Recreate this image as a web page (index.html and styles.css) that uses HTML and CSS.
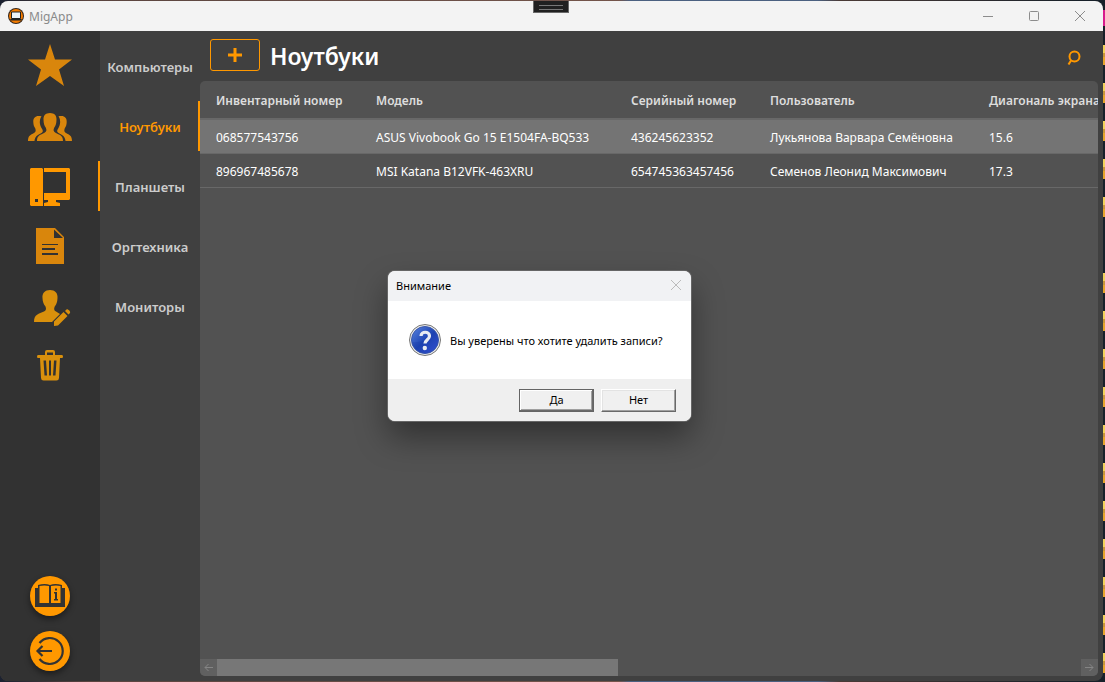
FILE: index.html
```html
<!DOCTYPE html>
<html lang="ru">
<head>
<meta charset="utf-8">
<title>MigApp</title>
<link rel="stylesheet" href="styles.css">
</head>
<body>
<div class="desktop">
  <div class="window">
    <header class="titlebar">
      <svg class="app-logo" width="16" height="16" viewBox="0 0 16 16"><circle cx="8" cy="8" r="8" fill="#33251a"/><circle cx="8" cy="8" r="7" fill="#f57c00"/><path d="M3.500 4h9v6.500h-9z" fill="#eef3f8" stroke="#222" stroke-width="1"/><path d="M2 11h12l-1 1.500H3z" fill="#222"/></svg>
      <span class="app-name">MigApp</span>
      <div class="window-buttons">
        <button class="window-button" aria-label="Свернуть"><svg width="12" height="12" viewBox="0 0 12 12"><path d="M1 6.500h10"/></svg></button>
        <button class="window-button" aria-label="Развернуть"><svg width="12" height="12" viewBox="0 0 12 12"><rect x="1.500" y="1.500" width="9" height="9" rx="1"/></svg></button>
        <button class="window-button" aria-label="Закрыть"><svg width="12" height="12" viewBox="0 0 12 12"><path d="M1 1l10 10M11 1L1 11"/></svg></button>
      </div>
    </header>
    <div class="grip"></div>
    <div class="layout">
      <nav class="rail" aria-label="Разделы">
        <button class="rail-item" aria-label="Избранное"><svg width="44" height="44" viewBox="0 0 44 44"><path d="M22 0l5 15.500h17L31 25.500l5 16.500-14-10-14 10 5-16.500L0 15.500h17z"/></svg></button>
        <button class="rail-item" aria-label="Сотрудники"><svg width="44" height="44" viewBox="0 0 44 44"><path d="M13.500 12.300C8 10.800 5 13.500 5.300 18c.1 3 .8 4.500 2 6.500.8 2 .3 3.500-1.300 4.500-3.500 2-6 2.500-6 8h6.500c.3-4.500 3-6 7-8 2-1.300 1.500-2.500.3-4.500-2.300-4-2.800-8-.3-12.200z"/><path d="M30.500 12.300c5.500-1.500 8.500 1.200 8.200 5.700-.1 3-.8 4.500-2 6.500-.8 2-.3 3.500 1.300 4.500 3.500 2 6 2.500 6 8h-6.500c-.3-4.500-3-6-7-8-2-1.300-1.500-2.500-.3-4.500 2.300-4 2.800-8 .3-12.200z"/><path d="M22 9c-4.500 0-6.700 2.800-6.500 6.500.1 4 .7 6 2.200 8 1.300 2.500.8 4.200-1.200 5.300-4 2.200-7.500 2.400-7.500 8.200h26c0-5.800-3.500-6-7.500-8.200-2-1.100-2.500-2.800-1.200-5.300 1.500-2 2.100-4 2.200-8C28.700 11.800 26.500 9 22 9z"/></svg></button>
        <button class="rail-item rail-item--active" aria-label="Техника"><svg width="44" height="44" viewBox="0 0 44 44"><path fill-rule="evenodd" d="M3 4h11l1 1v37H3l-1-1V5zM7 35h3v3H7zM16 4h25l1 1v30l-1 1H28v2l4 1v3H16v-3l4-1v-2h-4v-7h22V8H16z"/></svg></button>
        <button class="rail-item" aria-label="Документы"><svg width="44" height="44" viewBox="0 0 44 44"><path fill-rule="evenodd" d="M8 4h19l9 9v27H8zM26 5.500V14h9zM14 20h16v1H14zM14 24h13v2H14zM14 29h16v2H14z"/></svg></button>
        <button class="rail-item rail-item--gold" aria-label="Редактирование"><svg width="44" height="44" viewBox="0 0 44 44"><path d="M22 6c-5 0-8 3-7.500 8 .2 4 1 6 3 8.500 1 2.500.5 4-1.500 5-5 2.500-10 2.500-10 10.500h18l8-8-4-2.500c-2-1-2.300-2.500-1.300-5 2-2.500 2.600-4.500 2.800-8.500C30 9 27 6 22 6z"/><path d="M26 42v-4.500L35.500 28l4 4L30 41.500zM37 27l1.500-1.500c1-1 4.500 2 3.500 3.500L40.500 30.500z"/></svg></button>
        <button class="rail-item rail-item--gold" aria-label="Удалить"><svg width="44" height="44" viewBox="0 0 44 44"><path fill-rule="evenodd" d="M17 11V8q0-2 2-2h6q2 0 2 2v3h7q1 0 1 1.500T34 14h-2l-1 20q-.2 2.500-2.500 2.500h-13Q13.200 36.500 13 34l-1-20h-2q-1 0-1-1.500T10 11zM19 11h6V8.500h-6zM15.500 16.500l1 15H19l-1-15zM21 16.500v15h2v-15zM26 16.500l-1 15h2.500l1-15z"/></svg></button>
        <div class="rail-bottom">
          <button class="round-button" aria-label="Справка"><svg width="40" height="40" viewBox="0 0 40 40"><path fill="#333" d="M5 12h3V9q7-2 12 0 5-2 12 0v3h3v19H5z"/><path fill="#ff9800" d="M9.500 10q5-1 9.500 0v17H9.500zM21 10q5-1 9.500 0v17H21z"/><path fill="#333" d="M25 12.500h2v2h-2zM24 16h3v7h1v1.500h-4V23h1v-5.500h-1z"/></svg></button>
          <button class="round-button" aria-label="Выход"><svg width="40" height="40" viewBox="0 0 40 40" fill="none" stroke="#333" stroke-width="2.200"><path d="M9.500 12a13 13 0 1 1 0 16M22 20H8M12.500 15L7.500 20l5 5"/></svg></button>
        </div>
      </nav>
      <nav class="submenu" aria-label="Техника">
        <button class="submenu-item">Компьютеры</button>
        <button class="submenu-item submenu-item--active">Ноутбуки</button>
        <button class="submenu-item">Планшеты</button>
        <button class="submenu-item">Оргтехника</button>
        <button class="submenu-item">Мониторы</button>
      </nav>
      <main class="content">
        <div class="toolbar">
          <button class="add-button" aria-label="Добавить"><svg width="14" height="14" viewBox="0 0 14 14"><path d="M7 0v14M0 7h14"/></svg></button>
          <h1 class="page-title">Ноутбуки</h1>
          <button class="search-button" aria-label="Поиск"><svg width="14" height="16" viewBox="0 0 14 16"><circle cx="7.500" cy="6.500" r="5"/><path d="M4 10.500L1.500 14.500"/></svg></button>
        </div>
        <section class="panel">
          <table class="grid">
            <colgroup><col class="col-inventory"><col class="col-model"><col class="col-serial"><col class="col-user"><col class="col-screen"></colgroup>
            <thead><tr><th>Инвентарный номер</th><th>Модель</th><th>Серийный номер</th><th>Пользователь</th><th>Диагональ экрана</th></tr></thead>
            <tbody>
              <tr class="selected"><td>068577543756</td><td>ASUS Vivobook Go 15 E1504FA-BQ533</td><td>436245623352</td><td>Лукьянова Варвара Семёновна</td><td>15.6</td></tr>
              <tr><td>896967485678</td><td>MSI Katana B12VFK-463XRU</td><td>654745363457456</td><td>Семенов Леонид Максимович</td><td>17.3</td></tr>
            </tbody>
          </table>
          <div class="scrollbar">
            <button class="scroll-arrow" aria-label="Влево"><svg width="9" height="9" viewBox="0 0 9 9"><path d="M9 4.500H1M4.500 1L1 4.500 4.500 8"/></svg></button>
            <div class="scroll-track"><div class="scroll-thumb"></div></div>
            <button class="scroll-arrow" aria-label="Вправо"><svg width="9" height="9" viewBox="0 0 9 9"><path d="M0 4.500h8M4.500 1L8 4.500 4.500 8"/></svg></button>
          </div>
        </section>
      </main>
    </div>
  </div>
  <div class="desktop-edge"></div>

  <div class="dialog" role="dialog" aria-labelledby="dialog-title">
    <header class="dialog-header">
      <h2 class="dialog-title" id="dialog-title">Внимание</h2>
      <button class="dialog-close" aria-label="Закрыть"><svg width="12" height="12" viewBox="0 0 12 12"><path d="M1 1l10 10M11 1L1 11"/></svg></button>
    </header>
    <div class="dialog-body">
      <svg width="32" height="32" viewBox="0 0 32 32">
        <defs><linearGradient id="blue" x1="0" y1="0" x2="1" y2="1"><stop offset="0" stop-color="#5a86e0"/><stop offset=".5" stop-color="#1f45b4"/><stop offset="1" stop-color="#3f5ae4"/></linearGradient></defs>
        <circle cx="16" cy="16" r="15.500" fill="#e9e9e9" stroke="#777"/><circle cx="16" cy="16" r="13.500" fill="url(#blue)" stroke="#3a58ac"/>
        <path d="M3 18c8 1 18-2 22-11 6 6 5 14 0 19-7 6-20 4-22-8z" fill="#1434a0" opacity=".25"/>
        <path d="M12 12c0-5 8.500-5 8.500 0 0 3.500-4.500 4-4.500 7.500" fill="none" stroke="#e8ebf2" stroke-width="3.200"/><circle cx="15.800" cy="24" r="2.200" fill="#e8ebf2"/>
      </svg>
      <p class="dialog-text">Вы уверены что хотите удалить записи?</p>
    </div>
    <footer class="dialog-footer">
      <button class="classic-button classic-button--default">Да</button>
      <button class="classic-button">Нет</button>
    </footer>
  </div>
</div>
</body>
</html>
```
FILE: styles.css
```css
* { box-sizing: border-box; }

body {
  margin: 0;
  font-family: "Noto Sans", "Open Sans", sans-serif;
  font-size: 12px;
  color: #fff;
}

button {
  margin: 0;
  padding: 0;
  border: 0;
  background: none;
  font: inherit;
  color: inherit;
}

svg { display: block; }

.desktop {
  position: relative;
  height: 100vh;
  padding: 1px 2px 1px 0;
  overflow: hidden;
  background: linear-gradient(90deg, #1b2130, #5a443f 8%, #74554b 56%, #4b6080 57%, #4b6080 74%, #4a3a36 76%, #172029 98%);
}

.window {
  position: relative;
  display: flex;
  flex-direction: column;
  height: 100%;
  border-radius: 8px;
  overflow: hidden;
  background: #404040;
}

.titlebar {
  display: flex;
  align-items: center;
  flex: none;
  height: 30px;
  padding-left: 8px;
  background: #f3f3f3;
  color: #8a8a8a;
}

.app-name { margin-left: 5px; }

.window-buttons { display: flex; margin-left: auto; }

.window-button {
  display: grid;
  place-items: center;
  width: 46px;
  height: 30px;
}

.window-button svg,
.dialog-close svg { fill: none; stroke: #8c8c8c; }

.grip {
  position: absolute;
  top: -1px;
  left: 533px;
  width: 36px;
  height: 13px;
  padding: 4px 5px;
  border: 1px solid #686868;
  background: #202020;
}

.grip::before {
  content: "";
  display: block;
  height: 3px;
  border: solid #777;
  border-width: 1px 0;
}

.layout { display: flex; flex: 1; min-height: 0; }

.rail {
  display: flex;
  flex-direction: column;
  gap: 10px;
  flex: none;
  width: 100px;
  padding: 10px 0;
  background: #323232;
}

.rail-item {
  display: grid;
  place-items: center;
  height: 50px;
  border: solid transparent;
  border-width: 0 2px;
  fill: #d9860c;
}

.rail-item--gold { fill: #d9900c; }
.rail-item--active { border-right-color: #ff9800; fill: #ff9800; }

.rail-bottom {
  display: flex;
  flex-direction: column;
  align-items: center;
  gap: 15px;
  margin-top: auto;
}

.round-button {
  width: 40px;
  height: 40px;
  border-radius: 50%;
  background: #ff9800;
  box-shadow: 0 3px 6px rgba(0, 0, 0, .45);
}

.submenu {
  display: flex;
  flex-direction: column;
  gap: 10px;
  flex: none;
  width: 100px;
  padding: 10px 0;
}

.submenu-item {
  height: 50px;
  padding-top: 2px;
  border: solid transparent;
  border-width: 0 2px;
  font-size: 13px;
  font-weight: 600;
  color: #ccc;
}

.submenu-item--active { border-right-color: #ff9800; color: #ff9800; }

.content {
  display: flex;
  flex-direction: column;
  flex: 1;
  min-width: 0;
  padding: 0 5px 5px 0;
}

.toolbar {
  display: flex;
  align-items: center;
  flex: none;
  height: 50px;
  padding: 0 17px 2px 10px;
}

.add-button {
  display: grid;
  place-items: center;
  width: 50px;
  height: 32px;
  border: 1px solid #ff9800;
  border-radius: 3px;
}

.add-button svg { stroke: #ff9800; stroke-width: 3; }

.page-title {
  margin: 0 auto 0 10px;
  padding-top: 2px;
  font-size: 23px;
  font-weight: 600;
  line-height: 32px;
}

.search-button { padding-top: 6px; }
.search-button svg { fill: none; stroke: #ff9800; stroke-width: 2; }

.panel {
  display: flex;
  flex-direction: column;
  flex: 1;
  border-radius: 5px;
  overflow: hidden;
  background: #525252;
}

.grid {
  width: 100%;
  min-width: 900px;
  table-layout: fixed;
  border-collapse: separate;
  border-spacing: 0;
}

.col-inventory { width: 160px; }
.col-model { width: 255px; }
.col-serial { width: 139px; }
.col-user { width: 219px; }

.grid th,
.grid td {
  height: 34px;
  padding: 1px 0 0 16px;
  border-bottom: 1px solid #686868;
  text-align: left;
  white-space: nowrap;
}

.grid th {
  height: 39px;
  padding-top: 2px;
  border-bottom-width: 2px;
  font-weight: 600;
  color: #ddd;
}

.selected { background: #747474; }

.scrollbar { display: flex; height: 17px; margin-top: auto; }

.scroll-arrow {
  display: grid;
  place-items: center;
  width: 17px;
  background: #606060;
}

.scroll-arrow svg { fill: none; stroke: #858585; }
.scroll-track { flex: 1; }
.scroll-thumb { width: 46.4%; height: 100%; background: #777; }

.desktop-edge {
  position: absolute;
  top: 45px;
  right: 0;
  bottom: 0;
  width: 2px;
  background: repeating-linear-gradient(#f2d35c 0 8px, #c8963a 8px 12px, #e6a52c 12px 20px, #17212a 20px 38px);
}

.desktop-edge::before {
  content: "";
  position: absolute;
  top: -35px;
  right: 0;
  width: 2px;
  height: 16px;
  background: #d81b8c;
}

.desktop-edge::after {
  content: "";
  position: absolute;
  top: 188px;
  right: 0;
  width: 2px;
  height: 32px;
  background: #17212a;
}

.dialog {
  position: absolute;
  top: 271px;
  left: 388px;
  width: 303px;
  border-radius: 7px;
  overflow: hidden;
  background: #fff;
  box-shadow: 0 0 0 1px #666, 0 16px 32px rgba(0, 0, 0, .4);
  font-size: 11px;
  color: #000;
}

.dialog-header {
  display: flex;
  align-items: center;
  justify-content: space-between;
  height: 30px;
  padding: 0 9px 2px 8px;
  background: #f1f2f4;
}

.dialog-title { margin: 0; font-size: 11px; font-weight: 400; }
.dialog-close svg { stroke: #bbb; }

.dialog-body {
  display: flex;
  align-items: center;
  gap: 9px;
  height: 78px;
  padding-left: 21px;
}

.dialog-text { margin: 0; white-space: nowrap; }

.dialog-footer {
  display: flex;
  justify-content: flex-end;
  gap: 7px;
  padding: 10px 15px 9px;
  background: #efefef;
}

.classic-button {
  width: 75px;
  height: 23px;
  padding-bottom: 2px;
  border: 1px solid;
  border-color: #fff #696969 #696969 #fff;
  background: #f0f0f0;
  box-shadow: inset -1px -1px #a0a0a0, inset 1px 1px #e3e3e3;
}

.classic-button--default {
  border-color: #646464;
  box-shadow: inset -1px -1px #696969, inset 1px 1px #fff, inset -2px -2px #a0a0a0;
}
```
